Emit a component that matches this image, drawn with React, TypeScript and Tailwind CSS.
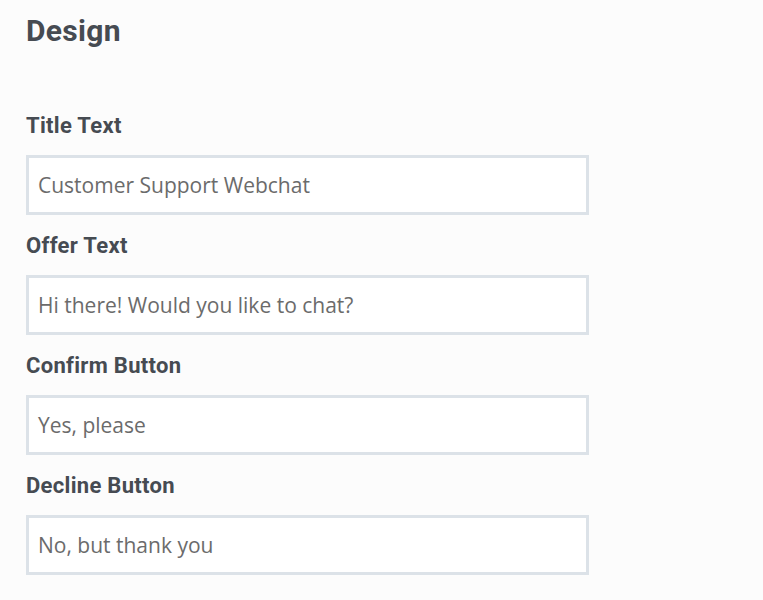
import React from 'react';

const fields = [
  { label: 'Title Text', value: 'Customer Support Webchat' },
  { label: 'Offer Text', value: 'Hi there! Would you like to chat?' },
  { label: 'Confirm Button', value: 'Yes, please' },
  { label: 'Decline Button', value: 'No, but thank you' },
];

export default function App() {
  return (
    <div className="min-h-[600px] w-[763px] bg-[#fcfcfc] pl-[26px] pt-[13px] font-['Roboto',sans-serif]">
      <h1 className="text-[30px] leading-[36px] font-bold tracking-[0.3px] text-[#464b52]">Design</h1>
      <div className="mt-[63px] flex flex-col gap-[17px]">
        {fields.map((f) => (
          <div key={f.label} className="flex flex-col">
            <label className="pt-[1px] text-[22px] leading-[26px] font-bold tracking-[0.3px] text-[#464b52]">
              {f.label}
            </label>
            <div className="mt-[16px] flex h-[60px] w-[563px] items-center border-[3px] border-[#dce2e8] bg-white px-[9px]">
              <span className="pt-[2px] font-['Open_Sans',sans-serif] text-[21px] text-[#6b6b6b]">{f.value}</span>
            </div>
          </div>
        ))}
      </div>
    </div>
  );
}
